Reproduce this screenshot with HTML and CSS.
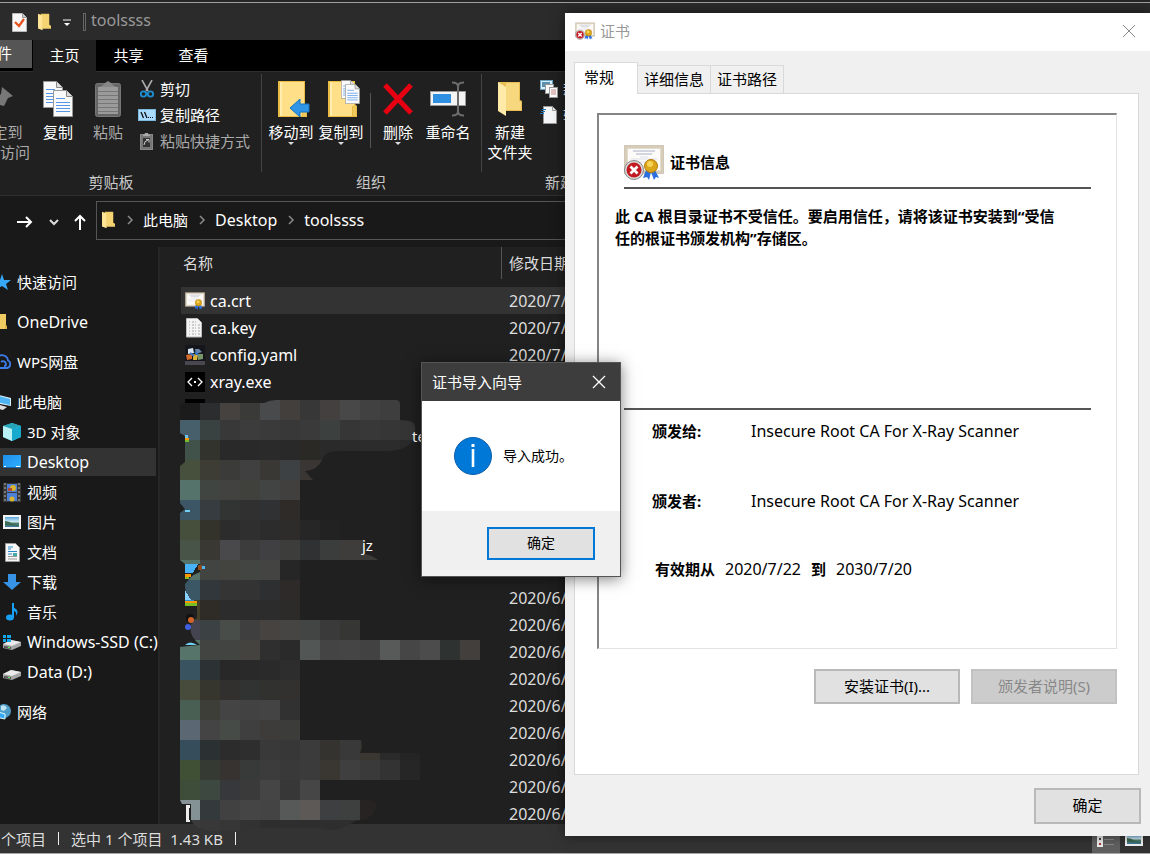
FILE: index.html
```html
<!DOCTYPE html>
<html lang="zh-CN">
<head>
<meta charset="utf-8">
<title>toolssss</title>
<link rel="stylesheet" href="styles.css">
</head>
<body>
<svg class="symbols" aria-hidden="true">
  <linearGradient id="g-blue" x1="0" y1="0" x2="1" y2="1"><stop offset="0" stop-color="#1f8ee8"/><stop offset="1" stop-color="#2fb0ff"/></linearGradient>
  <linearGradient id="g-sky" x1="0" y1="0" x2="0" y2="1"><stop offset="0" stop-color="#5aa7dc"/><stop offset="0.5" stop-color="#d6ecf5"/><stop offset="0.6" stop-color="#4d7f68"/><stop offset="1" stop-color="#3f78a8"/></linearGradient>
  <symbol id="folder" viewBox="0 0 14 18"><path d="M3 0h9v12l2 1v3H3z" fill="#eec65b"/><path d="M0 0l5 2v16l-5-2z" fill="#ffe495"/><path d="M5 1h7v11l2 2v2H5z" fill="#f4d372"/></symbol>
  <symbol id="bigfolder" viewBox="0 0 32 36"><path d="M0 0h27v23l2 2v11H0z" fill="#e9bd45"/><path d="M2 1h24v24H24v10H2z" fill="#ffdf88"/><path d="M2 1h2v34H2z" fill="#ffecb0"/><path d="M25 26q2-3 3 0v9h-3z" fill="#f0c95f"/></symbol>
  <symbol id="newfolder" viewBox="0 0 24 36"><path d="M0 1h22v18l2 1v10H0z" fill="#e8bd52"/><path d="M8 2h13v18l2 1v8H8z" fill="#f7d87e"/><path d="M0 1l8 5v29l-8-5z" fill="#ffeaa8"/></symbol>
  <symbol id="page" viewBox="0 0 20 27"><path d="M.5.500h13l6 6v20H.5z" fill="#fafafa" stroke="#999"/><path d="M13.500.5v6h6" fill="#ddd" stroke="#888"/><path d="M3 8.500h9M3 12.500h14M3 15.500h14M3 18.500h14M3 21.500h14" stroke="#5596e6"/></symbol>
  <symbol id="chev" viewBox="0 0 8 10"><path d="M2 1l4 4-4 4" fill="none" stroke="#8a8a8a" stroke-width="1.500"/></symbol>
  <symbol id="cert" viewBox="0 0 40 35"><rect x=".5" y=".5" width="39" height="28" fill="#d6ccb9" stroke="#b5aa93" stroke-dasharray="1 1"/><rect x="3.500" y="3.500" width="33" height="22" fill="#fcfbf7" stroke="#e4dccb"/><path d="M9 6h22M12 9h16" stroke="#a9b0cc"/><path d="M7 14h26M7 17h26M16 12h8" stroke="#e0e0ec"/><path d="M22 25l-3 8 4-1 2 3 2-8 3 8 2-3 3 1-4-8z" fill="#2b6fe0"/><circle cx="27" cy="21" r="6.500" fill="#dba51c" stroke="#b67b08"/><circle cx="26" cy="19" r="3" fill="#f6d458"/></symbol>
  <symbol id="certbad" viewBox="0 0 40 35"><use href="#cert" width="40" height="35"/><circle cx="10" cy="25" r="9.500" fill="#d8d8d8" stroke="#888"/><circle cx="10" cy="25" r="7.500" fill="#c31a22"/><path d="M6.500 21.500l7 7m0-7l-7 7" stroke="#fff" stroke-width="2.800"/></symbol>
  <symbol id="drive" viewBox="0 0 18 12"><path d="M0 6l8-4 10 2v4l-9 4-9-2z" fill="#a5a5a5"/><path d="M0 6l8-4 10 2-9 4z" fill="#e9e9ec"/><path d="M1 8l7 1v2l-7-1z" fill="#555"/><path d="M5 9.500h2" stroke="#5f5"/></symbol>
  <symbol id="photo" viewBox="0 0 18 14"><rect width="18" height="14" fill="#f4f4f4"/><rect x="2" y="2" width="14" height="10" fill="url(#g-sky)"/><path d="M2 6q4 0 8 3l6 1v1l-14-1z" fill="#3d6b54"/></symbol>
</svg>

<main class="explorer">
  <header class="titlebar">
    <svg width="15" height="19"><path d="M.5.500h10l4 4v14H.5z" fill="#f7f7f7" stroke="#b9b9b9"/><path d="M10.500.5v4h4" fill="#ccc" stroke="#999"/><path d="M3 9l4 4 5-7" fill="none" stroke="#e8501c" stroke-width="2.200"/></svg>
    <svg width="13" height="18"><use href="#folder"/></svg>
    <svg width="8" height="8"><path d="M0 1h8" stroke="#fff"/><path d="M1 4h6l-3 3z" fill="#fff"/></svg>
    <span class="title-sep"></span>
    <span class="title-text latin">toolssss</span>
  </header>

  <nav class="tabs">
    <button class="tab tab-file">文件</button>
    <button class="tab tab-active">主页</button>
    <button class="tab">共享</button>
    <button class="tab">查看</button>
  </nav>

  <section class="ribbon">
    <div class="group group-clip">
      <div class="group-body">
        <button class="big big-pin dim"><span class="pic"><svg width="30" height="30"><path d="M17 3l11 9-5 2-4 8-4-1-5 7-1-1 4-8-5-4 8-5z" fill="#777"/></svg></span><span>固定到<br>快速访问</span></button>
        <button class="big"><span class="pic"><svg width="30" height="36"><use href="#page" width="20" height="27"/><use href="#page" x="10" y="9" width="20" height="27"/></svg></span><span>复制</span></button>
        <button class="big dim"><span class="pic"><svg width="26" height="36"><rect x=".5" y="2.500" width="25" height="33" rx="2" fill="#666" stroke="#777"/><rect x="3" y="6" width="20" height="27" fill="#9a9a9a"/><path d="M3 10.500h20M3 14.500h20M3 18.500h20M3 22.500h20M3 26.500h20M3 30.500h20" stroke="#777"/><path d="M4 6q4-1 6-4l3-2 3 2q2 3 6 4z" fill="#888"/></svg></span><span>粘贴</span></button>
        <div class="smalls">
          <button class="small"><svg width="16" height="18"><path d="M3 0l6 11M13 0L7 11" stroke="#aaa" stroke-width="1.600"/><circle cx="4.500" cy="14" r="2.700" fill="none" stroke="#1d8fd1" stroke-width="1.800"/><circle cx="11.500" cy="14" r="2.700" fill="none" stroke="#1d8fd1" stroke-width="1.800"/></svg>剪切</button>
          <button class="small"><svg width="18" height="12" class="wide"><rect x=".5" y=".5" width="17" height="11" fill="#a9dcff" stroke="#7db8df"/><path d="M3 3l2.500 6M6.500 3l2.500 6" stroke="#111" stroke-width="1.300"/><path d="M10 8.500h5" stroke="#111" stroke-dasharray="1 1"/></svg>复制路径</button>
          <button class="small dim"><svg width="16" height="18"><rect x="1.500" y="2.500" width="12" height="15" fill="#777" stroke="#888"/><rect x="4" y="6" width="7" height="9" fill="#333"/><path d="M4 3q2 0 2-2h3q0 2 2 2v1H4z" fill="#aaa"/><path d="M5 13q0-4 4-5M7 7.500h3v3" stroke="#ccc" fill="none"/></svg>粘贴快捷方式</button>
        </div>
      </div>
      <div class="group-label">剪贴板</div>
    </div>
    <div class="group group-org">
      <div class="group-body">
        <button class="big arrow"><span class="pic"><svg width="38" height="38"><use href="#bigfolder" x="6" y="1" width="32" height="36"/><path d="M18 28l10-9v5h9v8h-9v5z" fill="#2f95e6" stroke="#1873c0"/></svg></span><span>移动到</span></button>
        <button class="big arrow"><span class="pic"><svg width="38" height="38"><use href="#bigfolder" x="6" y="1" width="32" height="36"/><use href="#page" x="19" width="14" height="19"/><use href="#page" x="23" y="4" width="15" height="20"/></svg></span><span>复制到</span></button>
        <span class="split"></span>
        <button class="big arrow"><span class="pic"><svg width="30" height="32"><path d="M2 2l26 28M28 2L2 30" stroke="#e60012" stroke-width="5"/></svg></span><span>删除</span></button>
        <button class="big"><span class="pic"><svg width="36" height="36"><rect x=".5" y="10.500" width="35" height="14" fill="#f4f4f4" stroke="#999"/><rect x="3" y="13" width="18" height="9" fill="#2f8fe0"/><path d="M22 1.500q6 0 6 4v25q0 4-6 4M34 1.500q-6 0-6 4v25q0 4 6 4" fill="none" stroke="#6b6b6b" stroke-width="2"/></svg></span><span>重命名</span></button>
      </div>
      <div class="group-label">组织</div>
    </div>
    <div class="group group-new">
      <div class="group-body">
        <button class="big"><span class="pic"><svg width="24" height="36"><use href="#newfolder"/></svg></span><span>新建<br>文件夹</span></button>
        <div class="smalls">
          <button class="small"><svg width="18" height="18"><rect x=".5" y=".5" width="12" height="9" fill="#d8eefb" stroke="#6aa4c4"/><rect x="2" y="2" width="8" height="5" fill="#5a8fb0"/><rect x="5.500" y="4.500" width="8" height="9" fill="#fafafa" stroke="#999"/><rect x="9.500" y="7.500" width="8" height="10" fill="#fff" stroke="#999"/><path d="M11 10h5M11 12h5M11 14h5" stroke="#c88"/></svg>新建项目</button>
          <button class="small"><svg width="18" height="18"><path d="M3.500.5h9l4 4v13h-13z" fill="#f4f6f7" stroke="#999"/><path d="M12.500.5v4h4" fill="none" stroke="#999"/><path d="M2 3.500h4M1 5.500h4M0 7.500h4" stroke="#1c74b8"/></svg>轻松访问</button>
        </div>
      </div>
      <div class="group-label">新建</div>
    </div>
  </section>

  <section class="navbar">
    <button class="nav-btn" aria-label="前进"><svg width="16" height="14"><path d="M0 7h14M9 2l5 5-5 5" fill="none" stroke="#fff" stroke-width="2"/></svg></button>
    <button class="nav-btn" aria-label="最近位置"><svg width="10" height="8"><path d="M1 2l4 4 4-4" fill="none" stroke="#ddd" stroke-width="2"/></svg></button>
    <button class="nav-btn" aria-label="上移"><svg width="12" height="16"><path d="M6 16V2M1 7l5-5 5 5" fill="none" stroke="#fff" stroke-width="2"/></svg></button>
    <div class="address">
      <svg width="13" height="18"><use href="#folder"/></svg>
      <svg width="8" height="10"><use href="#chev"/></svg>
      <a href="#pc">此电脑</a>
      <svg width="8" height="10"><use href="#chev"/></svg>
      <a href="#desktop" class="latin">Desktop</a>
      <svg width="8" height="10"><use href="#chev"/></svg>
      <a href="#tools" class="latin">toolssss</a>
    </div>
  </section>

  <div class="body">
    <aside class="sidebar">
      <ul>
        <li class="root"><svg width="18" height="18"><path d="M9 1l2 6 7 0-5 4 2 6-6-4-6 4 2-6-5-4h7z" fill="#35a7f5"/></svg>快速访问</li>
      </ul>
      <ul>
        <li class="root latin"><svg width="18" height="18"><rect x="4" y="1" width="9" height="15" fill="#f0cb63"/><path d="M12 11l2 2v3h-2z" fill="#e0b545"/></svg>OneDrive</li>
      </ul>
      <ul>
        <li class="root"><svg width="18" height="18"><path d="M5 15h9a4 4 0 0 0 1-7.500A6 6 0 0 0 4 5M8 9a3 3 0 0 1 5 2q0 2-2 2" fill="none" stroke="#3c7dea" stroke-width="1.800"/></svg>WPS网盘</li>
      </ul>
      <ul>
        <li class="root"><svg width="18" height="18"><path d="M2 1l16 4v8L2 10z" fill="#d8eefa"/><path d="M3 2l14 4v6L3 9z" fill="#4eb5f5"/><path d="M3 11l11 3-4 3-7-2z" fill="#ddd"/></svg>此电脑</li>
        <li><svg width="18" height="18"><path d="M0 3l9-3 9 3v11l-9 4-9-4z" fill="#3fc3dc"/><path d="M0 3l9-3 9 3-9 3z" fill="#27a4b8"/><path d="M0 3l9 3v12l-9-4z" fill="#b8f0f3"/><path d="M9 6l9-3v11l-9 4z" fill="#18a9cf"/></svg>3D 对象</li>
        <li class="selected latin"><svg width="18" height="14"><rect width="18" height="13" fill="url(#g-blue)"/><path d="M0 12.500h18" stroke="#1767a8"/><path d="M1 11.500h2M13 11.500h4" stroke="#fff"/></svg>Desktop</li>
        <li><svg width="18" height="19"><rect width="18" height="19" fill="#3a3a3a"/><path d="M2 0v19M16 0v19" stroke="#777" stroke-width="2" stroke-dasharray="2 2"/><rect x="4" y="1" width="10" height="8" fill="#4d80d8"/><rect x="4" y="10" width="10" height="8" fill="#4d80d8"/><circle cx="10" cy="5" r="3" fill="#d9b42f"/><path d="M5 5h4v3H5z" fill="#b04a36"/><circle cx="9" cy="16" r="2.500" fill="#d9b42f"/></svg>视频</li>
        <li><svg width="18" height="14"><use href="#photo"/></svg>图片</li>
        <li><svg width="18" height="19"><path d="M2.500.5h10l4 4v14h-14z" fill="#f7f7f7" stroke="#999"/><path d="M5 4h5M5 6h3M5 8.500h9M5 11h4" stroke="#2489cf"/><path d="M5 13.500h9M5 16h9" stroke="#999"/><rect x="10" y="10" width="4" height="3" fill="#4aa"/></svg>文档</li>
        <li><svg width="18" height="18"><path d="M5 1h8v8h5l-9 8-9-8h5z" fill="#3793e6"/></svg>下载</li>
        <li><svg width="18" height="18"><path d="M9 0q0 4 4 6 3 3 0 7 1-4-2-5v6" fill="#18a0f5"/><path d="M10 0v14" stroke="#18a0f5" stroke-width="2"/><ellipse cx="7" cy="14.500" rx="4" ry="3" fill="#18a0f5"/></svg>音乐</li>
        <li class="latin"><svg width="18" height="16"><use href="#drive" y="4" width="18" height="12"/><path d="M0 1h3v3H0zM4 1h4v3H4zM0 5h3v3H0zM4 5h4v3H4z" fill="#12a8ea"/></svg>Windows-SSD (C:)</li>
        <li class="latin"><svg width="18" height="16"><use href="#drive" y="4" width="18" height="12"/></svg>Data (D:)</li>
      </ul>
      <ul>
        <li class="root"><svg width="18" height="18"><circle cx="11" cy="8" r="7" fill="#4e9dc8"/><path d="M8 3q4-2 6 2l-3 3-3-1z" fill="#bfe3f2"/><path d="M2 8l10 3v5L2 14z" fill="#3aa9f5" stroke="#dff"/></svg>网络</li>
      </ul>
    </aside>

    <section class="files">
      <table>
        <thead><tr><th class="col-name"><div>名称</div></th><th><div>修改日期</div></th></tr></thead>
        <tbody>
          <tr class="picked"><td><span class="file"><svg width="20" height="18"><use href="#cert"/></svg>ca.crt</span></td><td>2020/7/22</td></tr>
          <tr><td><span class="file"><svg width="20" height="20"><path d="M1.500.5h11l4 4v14.500h-15z" fill="#f4f4f4" stroke="#bbb"/><path d="M4 4h7M4 7h11M4 10h11M4 13h11M4 16h11" stroke="#aaa" stroke-dasharray="1 2 2 1"/></svg>ca.key</span></td><td>2020/7/22</td></tr>
          <tr><td><span class="file"><svg width="20" height="20"><rect width="20" height="20" fill="#15151c"/><rect y="16" width="20" height="4" fill="#4a4650"/><path d="M3 4l5-1 1 5-6 1z" fill="#d5e4ee"/><path d="M10 4l4 0 3 3-6 2z" fill="#6687a8"/><path d="M1 10l6-1v5l-5 1z" fill="#d66a28"/><path d="M8 9l5 1-1 5H8z" fill="#d8b33a"/><path d="M13 9l5 0v5l-5 1z" fill="#79966a"/><path d="M5 8l4 3M10 7l3 3" stroke="#3577c8" stroke-width="2"/></svg>config.yaml</span></td><td>2020/7/22</td></tr>
          <tr><td><span class="file"><svg width="20" height="20"><rect width="20" height="20" fill="#000"/><path d="M7 6l-4 4 4 4M13 6l4 4-4 4" fill="none" stroke="#fff" stroke-width="1.300"/><rect x="9" y="9" width="2" height="2" fill="#fff"/></svg>xray.exe</span></td><td></td></tr>
          <tr><td><span class="file"><svg width="20" height="20"><rect width="20" height="20" fill="#000"/></svg></span></td><td></td></tr>
          <tr><td></td><td></td></tr>
          <tr><td></td><td></td></tr>
          <tr><td></td><td></td></tr>
          <tr><td></td><td></td></tr>
          <tr><td></td><td></td></tr>
          <tr><td></td><td>2020/6/22</td></tr>
          <tr><td></td><td>2020/6/22</td></tr>
          <tr><td></td><td>2020/6/22</td></tr>
          <tr><td></td><td>2020/6/22</td></tr>
          <tr><td></td><td>2020/6/22</td></tr>
          <tr><td></td><td>2020/6/22</td></tr>
          <tr><td></td><td>2020/6/22</td></tr>
          <tr><td></td><td>2020/6/22</td></tr>
          <tr><td></td><td>2020/6/22</td></tr>
          <tr><td></td><td>2020/6/22</td></tr>
        </tbody>
      </table>
      <svg class="mosaic" width="310" height="432" viewBox="0 0 310 432">
        <clipPath id="shape"><path d="M0 6Q1 3 4 3H84Q90 0 96 0H216Q220 0 220 4V20Q236 20 235 28 236 38 230 44 222 51 206 51H160Q144 51 142 60 138 70 125 71L133 80H120V120H160V140H184V154Q192 155 198 160H120V220H180V240H300V260H120V340H181Q183 346 180 353H240V380H140V400H190Q197 402 196 408 192 419 182 420 176 420 172 423 155 434 140 428H80Q50 434 25 430 14 427 11 420V404H2L0 400V247Q8 246 20 245 8 235 11 225 12 220 17 218V206Q4 198 5 184L10 178Q14 174 20 172V164H5L0 160V113L5 109 0 103V66L5 62V36L0 33z"/></clipPath>
        <g clip-path="url(#shape)" id="cells" shape-rendering="crispEdges"></g>
        <g shape-rendering="crispEdges">
          <path d="M5 35h3v3H5z" fill="#6cc3f5"/><path d="M5 38h4v2H5z" fill="#ff9800"/><path d="M5 40h4v2H5z" fill="#72bb2a"/>
          <path d="M5 110h5v2H5z" fill="#6fd0f5"/>
          <path d="M5 164h13l-5 9H5z" fill="#47b2f7"/><path d="M18 165h4v5h-4z" fill="#8d4a1d"/><path d="M22 166h3v3h-3z" fill="#4cb6f5"/><path d="M5 174h6v3H5z" fill="#ff9800"/><path d="M5 177h4v2H5z" fill="#83bd25"/>
          <path d="M5 190l6 10H5z" fill="#86d0fb"/><path d="M5 200h9v2H5z" fill="#2b8fd8"/><path d="M5 201h12v2H5z" fill="#ff9800"/><path d="M5 203h12v3H5z" fill="#76bf27"/>
        </g>
        <circle cx="10" cy="218" r="4" fill="#111"/><circle cx="11" cy="220" r="3" fill="#d2642a"/><circle cx="8" cy="227" r="3" fill="#3f60e0"/>
        <path d="M5 245q5-5 12 0z" fill="#6fd0f5"/>
        <path d="M6 405h4v3H9v12h1v2H6z" fill="#eee"/>
        <text x="232" y="42">te</text><text x="182" y="151">jz</text>
      </svg>
    </section>
  </div>

  <footer class="status">
    <span>个项目</span><i></i><span>选中 1 个项目&nbsp; 1.43 KB</span><i></i>
    <div class="views">
      <button class="view view-on" aria-label="详细信息"><svg width="20" height="18"><path d="M1 0h6v17H1z" fill="#eee"/><path d="M3 3h2v2H3zM3 8h2v2H3z" fill="#444"/><path d="M3 13h2v2H3z" fill="#a33"/><path d="M8 4.500h10M8 9.500h10M8 14.500h10" stroke="#888"/></svg></button>
      <button class="view" aria-label="大图标"><svg width="18" height="14"><use href="#photo"/></svg></button>
    </div>
  </footer>
</main>

<section class="cert" role="dialog" aria-label="证书">
  <header class="cert-title"><svg width="20" height="18"><use href="#certbad"/></svg><span>证书</span><button class="close" aria-label="关闭"><svg width="14" height="14"><path d="M1 1l12 12M13 1L1 13" stroke="#888"/></svg></button></header>
  <div class="cert-tabs">
    <button class="ctab ctab-on">常规</button><button class="ctab">详细信息</button><button class="ctab">证书路径</button>
  </div>
  <div class="panel">
    <div class="sheet">
      <h1 class="info"><svg width="40" height="35"><use href="#certbad"/></svg>证书信息</h1>
      <p class="notice">此 CA 根目录证书不受信任。要启用信任，请将该证书安装到“受信任的根证书颁发机构”存储区。</p>
      <dl class="facts">
        <div><dt>颁发给:</dt><dd class="latin">Insecure Root CA For X-Ray Scanner</dd></div>
        <div><dt>颁发者:</dt><dd class="latin">Insecure Root CA For X-Ray Scanner</dd></div>
      </dl>
      <p class="valid"><b>有效期从</b><span class="latin">2020/7/22</span><b>到</b><span class="latin">2030/7/20</span></p>
    </div>
    <div class="actions"><button class="btn">安装证书(I)...</button><button class="btn" disabled>颁发者说明(S)</button></div>
  </div>
  <div class="cert-foot"><button class="btn btn-ok">确定</button></div>
</section>

<section class="wizard" role="dialog" aria-label="证书导入向导">
  <header class="wiz-title">证书导入向导<button class="close" aria-label="关闭"><svg width="14" height="14"><path d="M1 1l12 12M13 1L1 13" stroke="#fff" stroke-width="1.300"/></svg></button></header>
  <div class="wiz-body"><svg width="38" height="38"><circle cx="19" cy="19" r="18.500" fill="#0078d7" stroke="#0a5ca8"/><path d="M19 12v18" stroke="#fff" stroke-width="2.600"/><rect x="17.500" y="7" width="3" height="3" fill="#fff"/></svg><span>导入成功。</span></div>
  <div class="wiz-foot"><button class="btn btn-focus">确定</button></div>
</section>
<script src="mosaic.js"></script>
</body>
</html>
```
FILE: styles.css
```css
* { box-sizing: border-box; }
body { margin: 0; background: #202020; color: #fff; font: 15px/20px "Noto Sans", "Noto Sans CJK SC", sans-serif; overflow: hidden; }
button { font: inherit; color: inherit; background: none; border: 0; padding: 0; margin: 0; }
svg { display: block; flex: none; }
a { color: inherit; text-decoration: none; }
ul, dl, p, h1, dd { margin: 0; padding: 0; }
.symbols { position: absolute; width: 0; height: 0; }
.latin { font-size: 16px; }

.explorer { display: flex; flex-direction: column; height: 100vh; overflow: hidden; white-space: nowrap; border-bottom: 1px solid #a8a8a8; }
.titlebar { flex: none; height: 40px; display: flex; align-items: center; padding: 4px 0 0 12px; background: linear-gradient(#262626 2px, #a0a0a0 2px, #a0a0a0 3px, #2b2b2b 3px); gap: 11px; }
.titlebar svg:nth-child(3) { margin: 2px 1px 0; }
.title-sep { width: 3px; height: 18px; border: 1px solid #666; }
.title-text { color: #999; margin: 0 0 4px -6px; }

.tabs { flex: none; display: flex; height: 32px; background: #000; border-bottom: 1px solid #2f2f2f; }
.tab { width: 65px; padding-bottom: 2px; }
.tab-file { width: 70px; height: 28px; margin-left: -38px; background: #555; }
.tab-active { width: 63px; height: 32px; margin-left: 1px; background: #202020; }

.ribbon { flex: none; display: flex; height: 124px; background: #202020; border-bottom: 1px solid #303030; }
.group { display: flex; flex-direction: column; flex: none; }
.group-clip { width: 300px; margin-left: -39px; }
.group-org { width: 220px; }
.group-new { width: 158px; }
.group-body { display: flex; height: 98px; padding: 2px 0 0 3px; border-left: 1px solid #444; margin-top: 2px; }
.group-clip .group-body { padding-left: 7px; }
.group-org .group-body { padding-left: 4px; }
.group-label { text-align: center; color: #c8c8c8; }
.big { display: flex; flex-direction: column; align-items: center; width: 50px; height: 90px; text-align: center; }
.big-pin { width: 62px; margin-right: 2px; }
.pic { display: flex; height: 46px; align-items: center; justify-content: center; }
.dim { color: #aaa; }
.arrow::after { content: ""; border: 3px solid transparent; border-top-color: #ddd; border-bottom: 0; }
.split { width: 1px; height: 55px; margin: 17px 2px 0 4px; background: #555; }
.smalls { margin-left: 5px; }
.group-clip .smalls { margin-left: 6px; }
.small { display: flex; align-items: center; height: 26px; gap: 5px; }
.small svg.wide { margin: 0 -1px; }

.navbar { flex: none; display: flex; align-items: center; height: 51px; background: #191919; padding-left: 17px; gap: 15px; }
.nav-btn { flex: none; }
.nav-btn:nth-child(1) { margin-right: 1px; }
.address { flex: 1; height: 39px; display: flex; align-items: center; margin: 0 0 3px -5px; border: 1px solid #555; padding-left: 5px; gap: 10px; }
.address svg:first-child { margin-right: 1px; }
.address a { margin-left: -1px; }

.body { flex: 1; display: flex; min-height: 0; }
.sidebar { flex: none; width: 160px; padding-top: 20px; background: #191919; border-right: 2px solid #262626; }
.sidebar ul { list-style: none; margin-bottom: 10px; }
.sidebar li { display: flex; align-items: center; gap: 6px; height: 30px; padding-left: 3px; }
.sidebar .root { padding-left: 0; margin-left: -7px; }
.sidebar .selected { height: 28px; margin: 1px 2px 1px 0; background: #333; }

.files { flex: 1; position: relative; padding-left: 21px; background: #202020; }
table { width: 100%; border-collapse: collapse; table-layout: fixed; }
th { font-weight: 400; text-align: left; padding: 0 0 8px; color: #ddd; }
th div { height: 32px; line-height: 32px; padding-left: 7px; border-left: 1px solid #555; }
.col-name { width: 320px; }
.col-name div { padding-left: 2px; border: 0; }
td { height: 27px; padding: 0 0 0 8px; color: #ddd; font-size: 16px; }
td:first-child { padding-left: 4px; color: #fff; }
.picked { background: #333; }
.file { display: flex; align-items: center; gap: 5px; height: 20px; }
.mosaic { position: absolute; left: 20px; top: 153px; }
.mosaic text { fill: #fff; font-size: 15px; }

.status { flex: none; display: flex; align-items: center; height: 29px; padding-left: 1px; gap: 12px; background: #333; color: #ddd; }
.status i { width: 1px; height: 13px; background: #eee; }
.views { display: flex; margin-left: auto; height: 29px; padding-right: 7px; }
.view { width: 28px; display: flex; align-items: center; justify-content: center; }
.view-on { background: #606060; margin-right: 5px; }
.view:last-child { width: 18px; }

.cert { position: absolute; left: 565px; right: 0; top: 13px; background: #f0f0f0; color: #000; box-shadow: 0 0 12px rgba(0, 0, 0, .5); }
.cert-title { display: flex; align-items: center; height: 38px; padding: 0 14px 2px 10px; gap: 5px; background: #fff; color: #999; }
.close { margin-left: auto; }
.cert-tabs { display: flex; align-items: flex-end; padding: 11px 9px 0; margin-bottom: -1px; }
.ctab { height: 29px; width: 73px; border: 1px solid #d9d9d9; border-left: 0; padding-bottom: 2px; }
.ctab-on { width: 64px; height: 32px; border-left: 1px solid #d9d9d9; border-bottom: 0; background: #fff; padding: 0 14px 4px 0; position: relative; z-index: 1; }
.panel { margin: 0 11px 0 9px; padding: 19px 21px 70px 22px; background: #fff; border: 1px solid #d9d9d9; }
.sheet { border: 2px solid #858585; border-right: 1px solid #e3e3e3; border-bottom: 1px solid #e3e3e3; padding: 28px 25px 69px; }
.info { display: flex; align-items: center; gap: 6px; font-size: 15px; height: 46px; border-bottom: 2px solid #555; padding-bottom: 6px; }
.notice { font-weight: 700; line-height: 22px; margin: 16px 0 159px -9px; max-width: 450px; }
.facts { border-top: 2px solid #555; padding: 11px 0 0 28px; }
.facts div { display: flex; margin-bottom: 50px; }
.facts dt { width: 99px; font-weight: 700; }
.valid { display: flex; gap: 10px; padding-left: 31px; margin-top: -2px; }
.actions { display: flex; justify-content: flex-end; gap: 11px; margin-top: 20px; }
.btn { height: 35px; width: 146px; background: #e1e1e1; border: 2px solid #b9b9b9; padding-bottom: 2px; color: #000; }
.btn:disabled { background: #ccc; border-color: #c2c2c2; color: #888; }
.cert-foot { display: flex; justify-content: flex-end; padding: 13px 9px 12px; }
.btn-ok { width: 107px; height: 36px; }

.wizard { position: absolute; left: 421px; top: 362px; width: 200px; background: #fff; color: #000; border: 1px solid #555; box-shadow: 0 2px 14px rgba(0, 0, 0, .5); }
.wiz-title { display: flex; align-items: center; height: 38px; padding: 0 14px 0 10px; background: #3d3d3d; color: #fff; }
.wiz-body { display: flex; align-items: center; height: 110px; padding-left: 32px; gap: 11px; font-size: 14px; }
.wiz-foot { display: flex; justify-content: flex-end; padding: 16px 25px; background: #f0f0f0; font-size: 14px; }
.btn-focus { width: 108px; height: 33px; border: 2px solid #0078d7; }
```
FILE: mosaic.js
```js
// Each row is a strip of 20px cells, left to right.
const rows = [
  "1b1b1b 2b2d2e 454240 3a3a39 484a4c 433f3d 373737 444040 484848 424141 3e3e3e",
  "465f6b 3a4241 383838 3c3c3c 3a3a3a 383838 3a3a3a 3c403e 363636 383838 363636 353535",
  "41524a 32332d 292929 292929 2a2a2a 292929 2a2926 2a2a2a 2b2b2b 2c2c2c 2c2c2c 2a2a2a",
  "46503d 3d3c35 3b3b3a 404040 393835 3e4144 3a3634 3a3634",
  "55736a 414542 424340 40403d 414443 42403e",
  "3d5666 363c3f 323333 303030 2f3133 2e2b29",
  "464f3c 33332c 2b2c2b 2f2f2f 2c2c2c 2d2c2b 262626 222222",
  "485448 393833 49494c 3c3c3c 404042 3d3d3b 303132 3a3d3c 3e3d3b 3c3b38",
  "56736a 414441 434340 424542 444442 262626",
  "3b5766 31373a 343434 333333 2d2f31 2d2a29",
  "44402a 2f2c28 2c2c2c 2c2c2c 2c2c2c 2c2b2a",
  "444450 3c4143 494d4a 403f3f 474340 464543 424543 3a3a3a 363634",
  "57746b 414441 424442 444340 2f2f2f 2a2a2a 525654 444444 454545 424242 575a58 464646 4c4c4c 2e3230 433f3c",
  "395361 2c3134 282828 292929 2a2a2a 2d2d2d",
  "474b3b 36362f 31302e 303332 313130 32312f",
  "4a5f53 3e3e38 444444 424242 444444 313131",
  "5b6873 444444 464b48 3f3f40 3e3c3a 3c3c3a",
  "364e5b 2b3033 2c2c2c 2e2e2e 393939 373737 3b3b3b 34332f 393939 3a3733 2a2a2a 242424",
  "3f5035 353a33 363330 373a39 3c3c3c 393939 3b3b3b 3a3733 3f3f3f 3a3a3a 333333 262626",
  "3d4d3a 3d4840 36383b 3a3a3a 454545 373737 464646",
  "849195 34393c 414141 454545 444444 565957 5c5957 3e3f41 3d403e 262322",
  "3b3b3b 383838 363636 323232 2e2e2e 2e2e2e 2e2e2e 2e2e2e 2e2e2e"
];
const cells = document.getElementById("cells");
rows.forEach((row, r) => row.split(" ").forEach((color, c) => {
  const rect = document.createElementNS("http://www.w3.org/2000/svg", "rect");
  rect.setAttribute("x", c * 20);
  rect.setAttribute("y", r * 20);
  rect.setAttribute("width", 20);
  rect.setAttribute("height", 20);
  rect.setAttribute("fill", "#" + color);
  cells.append(rect);
}));
```
